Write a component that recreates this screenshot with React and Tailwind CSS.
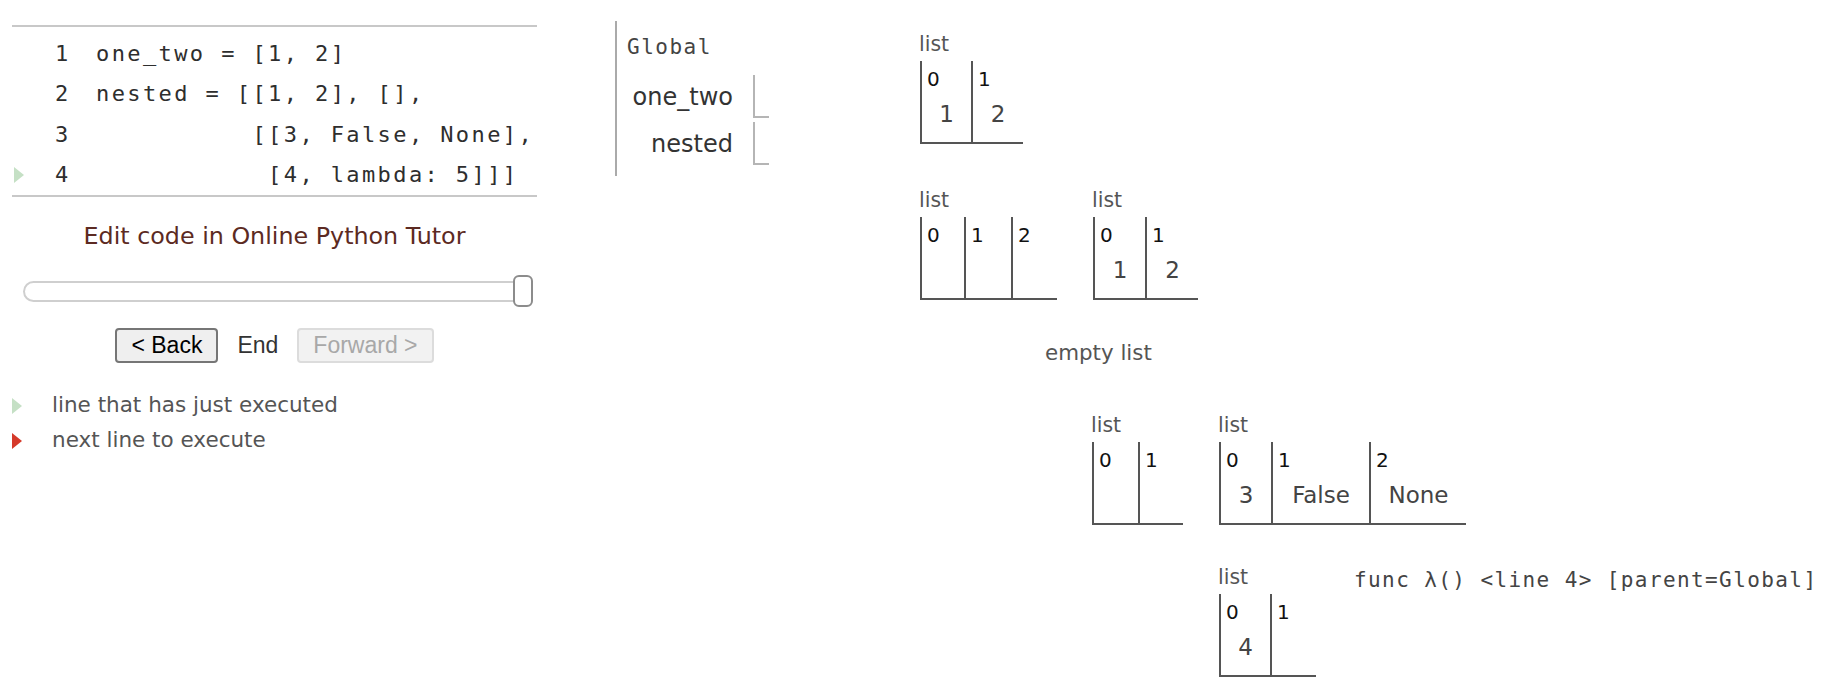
import React from "react";

const mono = "font-['DejaVu_Sans_Mono',monospace]";
const sans = "font-['DejaVu_Sans',sans-serif]";

const codeLines = [
  { n: 1, text: "one_two = [1, 2]" },
  { n: 2, text: "nested = [[1, 2], []," },
  { n: 3, text: "          [[3, False, None]," },
  { n: 4, text: "           [4, lambda: 5]]]", arrow: true },
];

// green / red markers used in the code gutter and legend
const Tri = ({ color }) => (
  <svg width="10" height="16" viewBox="0 0 10 16" className="block">
    <polygon points="0,0 10,8 0,16" fill={color} />
  </svg>
);

const Cell = ({ idx, val, w }) => (
  <div className={`${w} h-[83px] border-l-2 border-b-2 border-[#555] flex flex-col`}>
    <span className="pl-[5px] pt-[6px] text-[20px] leading-[24px] text-[#111]">{idx}</span>
    <span className="mt-[9px] text-center text-[23px] leading-[28px] text-[#444]">{val}</span>
  </div>
);

const HeapList = ({ pos, cells }) => (
  <div className={`absolute ${pos}`}>
    <div className="text-[20.5px] leading-[24px] text-[#555] mb-[5px] -ml-[1px]">list</div>
    <div className="flex">
      {cells.map((c) => (
        <Cell key={c.idx} {...c} />
      ))}
    </div>
  </div>
);

const Pointer = () => (
  <div className="ml-[20px] w-[16px] h-[43px] border-l-2 border-b-2 border-[#b5b5b5]" />
);

export default function App() {
  return (
    <div className={`relative w-[1830px] h-[700px] bg-white flex ${sans}`}>
      {/* code + controls */}
      <div className="ml-[12px] w-[525px] flex flex-col">
        <div className="mt-[25px] border-t-2 border-b-2 border-[#c8c8c8] pt-[6px]">
          {codeLines.map((l) => (
            <div key={l.n} className={`flex items-center h-[40.5px] ${mono} text-[22px] tracking-[2.4px] text-[#2e2e2e]`}>
              <div className="w-[43px] pl-[2px]">{l.arrow && <Tri color="#c5e0c5" />}</div>
              <span className="w-[41px]">{l.n}</span>
              <span className="whitespace-pre">{l.text}</span>
            </div>
          ))}
        </div>

        <div className="mt-[24px] text-center text-[23.8px] leading-[30px] text-[#5c2a22]">
          Edit code in Online Python Tutor
        </div>

        <div className="mt-[24px] ml-[11px] mr-[4px] h-[32px] relative flex items-center">
          <div className="w-full h-[21px] rounded-full border-2 border-[#cfcfcf] bg-white" />
          <div className="absolute right-0 top-0 w-[20px] h-[32px] rounded-[6px] border-2 border-[#8c8c8c] bg-white" />
        </div>

        <div className="mt-[21px] flex justify-center items-center gap-[19px] font-['Liberation_Sans',Arial,sans-serif] text-[23px]">
          <button className="h-[35px] px-[14px] rounded-[4px] border-2 border-[#767676] bg-[#efefef] text-black leading-none">
            &lt; Back
          </button>
          <span className="text-[#333]">End</span>
          <button disabled className="h-[35px] px-[14px] rounded-[4px] border-2 border-[#dcdcdc] bg-[#f2f2f2] text-[#a8a8a8] leading-none">
            Forward &gt;
          </button>
        </div>

        <div className="mt-[25px] flex flex-col text-[21.5px] text-[#555]">
          <div className="flex items-center h-[35px]">
            <div className="w-[40px]"><Tri color="#c5e0c5" /></div>
            <span>line that has just executed</span>
          </div>
          <div className="flex items-center h-[35px]">
            <div className="w-[40px]"><Tri color="#d53a2b" /></div>
            <span>next line to execute</span>
          </div>
        </div>
      </div>

      {/* frames */}
      <div className="ml-[78px] w-[285px]">
        <div className="mt-[21px] w-fit border-l-2 border-[#aaa] pl-[10px] pt-[13px] pb-[11px]">
          <div className={`${mono} text-[21px] tracking-[1.5px] leading-[26px] text-[#444]`}>Global</div>
          <div className="mt-[15px] flex flex-col gap-[4px] text-[24px] text-[#333]">
            <div className="flex items-center">
              <span className="w-[106px] text-right">one_two</span>
              <Pointer />
            </div>
            <div className="flex items-center">
              <span className="w-[106px] text-right">nested</span>
              <Pointer />
            </div>
          </div>
        </div>
      </div>

      {/* heap objects, placed as nodes of the diagram */}
      <div className="relative flex-1">
        <HeapList
          pos="left-[20px] top-[32px]"
          cells={[
            { idx: 0, val: "1", w: "w-[51px]" },
            { idx: 1, val: "2", w: "w-[52px]" },
          ]}
        />
        <HeapList
          pos="left-[20px] top-[188px]"
          cells={[
            { idx: 0, val: "", w: "w-[44px]" },
            { idx: 1, val: "", w: "w-[47px]" },
            { idx: 2, val: "", w: "w-[46px]" },
          ]}
        />
        <HeapList
          pos="left-[193px] top-[188px]"
          cells={[
            { idx: 0, val: "1", w: "w-[52px]" },
            { idx: 1, val: "2", w: "w-[53px]" },
          ]}
        />
        <div className="absolute left-[145px] top-[340px] text-[21.4px] leading-[26px] text-[#555]">empty list</div>
        <HeapList
          pos="left-[192px] top-[413px]"
          cells={[
            { idx: 0, val: "", w: "w-[46px]" },
            { idx: 1, val: "", w: "w-[45px]" },
          ]}
        />
        <HeapList
          pos="left-[319px] top-[413px]"
          cells={[
            { idx: 0, val: "3", w: "w-[52px]" },
            { idx: 1, val: "False", w: "w-[98px]" },
            { idx: 2, val: "None", w: "w-[97px]" },
          ]}
        />
        <HeapList
          pos="left-[319px] top-[565px]"
          cells={[
            { idx: 0, val: "4", w: "w-[51px]" },
            { idx: 1, val: "", w: "w-[46px]" },
          ]}
        />
        <div className={`absolute left-[454px] top-[567px] whitespace-pre ${mono} text-[21px] tracking-[1.4px] leading-[26px] text-[#444]`}>
          func λ() &lt;line 4&gt; [parent=Global]
        </div>
      </div>
    </div>
  );
}
